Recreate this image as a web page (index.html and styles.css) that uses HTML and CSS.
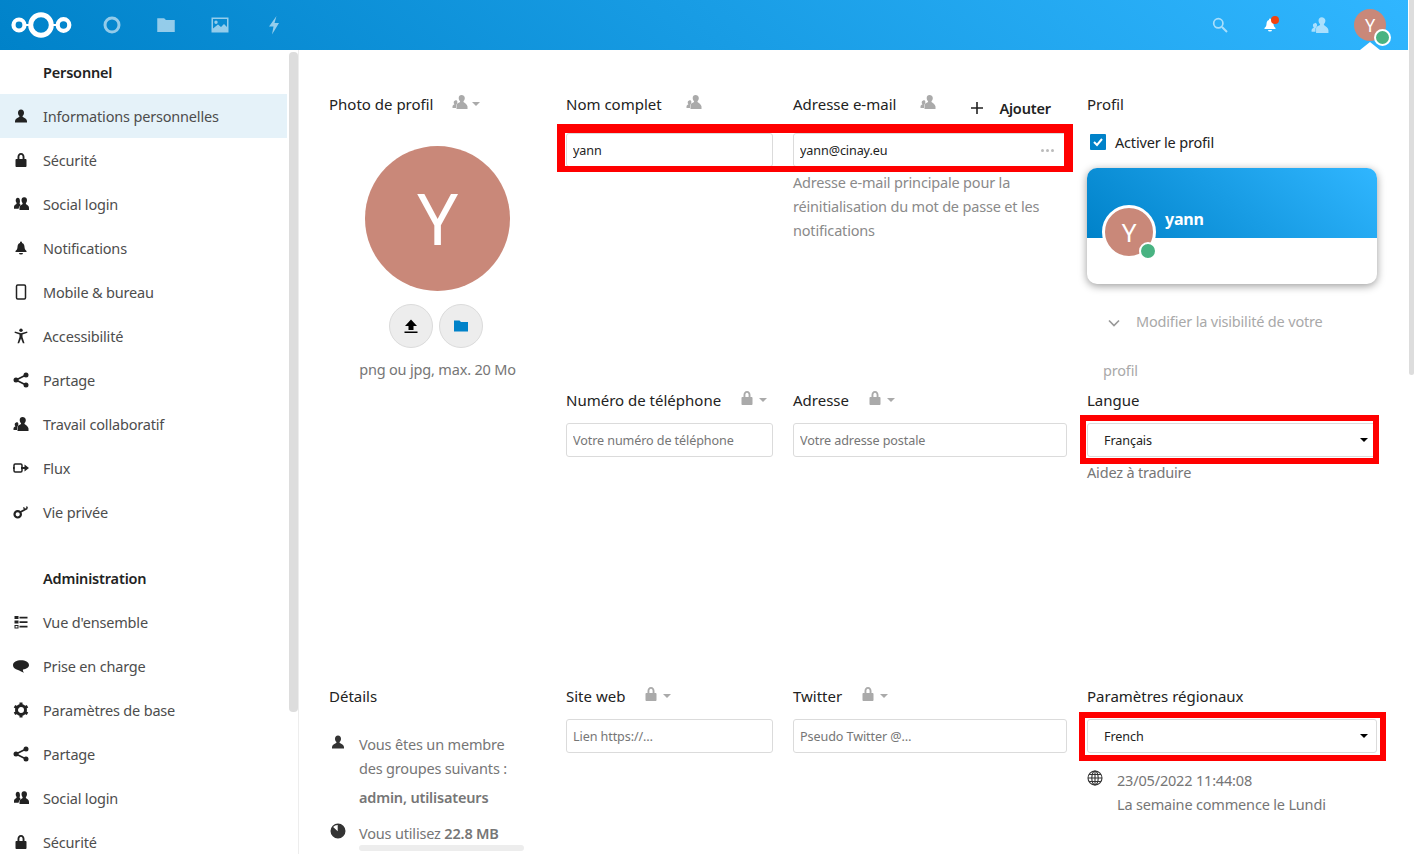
FILE: index.html
```html
<!DOCTYPE html>
<html lang="fr">
<head>
    <meta charset="UTF-8">
    <meta name="viewport" content="width=device-width, initial-scale=1.0">
    <title>Informations personnelles</title>
    <link rel="stylesheet" href="styles.css">
</head>
<body>
    <svg class="sprites" xmlns="http://www.w3.org/2000/svg">
        <symbol id="i-user" viewBox="0 0 16 16"><path d="M8 1.500c-1.900 0-3 1.400-3 3.200 0 1.200.5 2.300 1.200 3 .4.400.3 1.100-.1 1.400C4.500 10 2.300 10.700 2 13v1.500h12V13c-.3-2.300-2.500-3-4.100-3.900-.4-.3-.5-1-.1-1.400.7-.7 1.200-1.800 1.200-3 0-1.800-1.100-3.200-3-3.200z"/></symbol>
        <symbol id="i-lock" viewBox="0 0 16 16"><path fill-rule="evenodd" d="M8 1C5.800 1 4.500 2.800 4.500 5v2h-1c-.5 0-1 .4-1 1v6c0 .6.5 1 1 1h9c.5 0 1-.4 1-1V8c0-.6-.5-1-1-1h-1V5c0-2.200-1.300-4-3.500-4zm0 1.800c1 0 1.600 1 1.600 2.200v2H6.400V5c0-1.200.6-2.200 1.600-2.200z"/></symbol>
        <symbol id="i-group" viewBox="0 1.500 16 13.500" preserveAspectRatio="none"><path d="M11 2.500c-1.500 0-2.500 1.100-2.500 2.600 0 1 .4 1.800 1 2.400.3.300.2.800-.1 1-1.100.7-2.700 1.100-2.900 2.900v2h9.500v-2c-.2-1.800-1.800-2.200-2.900-2.900-.3-.2-.4-.7-.1-1 .6-.6 1-1.400 1-2.400 0-1.500-1-2.600-2.500-2.600z"/><path d="M4.800 3C3.500 3 2.700 4 2.700 5.300c0 .8.3 1.500.8 2 .2.300.2.700-.1.900-.9.600-2.300.9-2.400 2.400v1.700h4.600c.1-1.400 1-2.300 2.100-3 0-.4-.5-.9-.9-1.100-.2-.2-.3-.6-.1-.9.5-.5.2-1.300.2-2C6.900 4 6.100 3 4.800 3z"/></symbol>
        <symbol id="i-contacts" viewBox="0 0 16 16"><path d="M9.500 1C7.800 1 6.700 2.300 6.700 4c0 1.300.5 2.300 1.200 3 .3.400.2 1-.2 1.200-1.300.7-2.700 1.100-3.200 2.300V15h11v-2.500c-.3-2-2.300-3.200-3.700-4.300-.4-.2-.5-.8-.2-1.200.7-.7 1.200-1.700 1.200-3C12.800 2.300 11.200 1 9.500 1z"/><path d="M3.500 6.500c-1 0-1.800.8-1.800 1.900 0 .6.3 1.200.6 1.600.2.200.2.500-.1.600-.7.400-1.700.9-1.700 1.900V14H4v-3c.3-.6.7-1 1.100-1.400-.1-.2-.1-.3 0-.5.2-.3.3-.7.3-1.100 0-1.100-.8-2-1.900-2z"/></symbol>
        <symbol id="i-bell" viewBox="0 0 16 16"><path d="M8 1.500a1 1 0 0 0-1 1v.4C5.200 3.400 4.500 5 4.500 7c0 2-1 3-2 4v1h11v-1c-1-1-2-2-2-4 0-2-.7-3.600-2.500-4.100v-.4a1 1 0 0 0-1-1zM6 13a2 1.600 0 0 0 4 0z"/></symbol>
        <symbol id="i-phone" viewBox="0 0 16 16"><rect x="3.500" y="1" width="9" height="14" rx="1.200" fill="none" stroke="currentColor" stroke-width="1.500"/></symbol>
        <symbol id="i-access" viewBox="0 0 16 16"><circle cx="8" cy="2.300" r="1.700"/><path d="M1.500 4.800 6.500 6.500V9l-2 6.200h1.600L8 10.500l1.900 4.700h1.600L9.500 9V6.500l5-1.700-.4-1.200L8 5.300 1.900 3.600z"/></symbol>
        <symbol id="i-share" viewBox="0 0 16 16"><path d="M13 3 3 8l10 5" fill="none" stroke="currentColor" stroke-width="1.700"/><circle cx="3" cy="8" r="2.500"/><circle cx="13" cy="3" r="2.500"/><circle cx="13" cy="13" r="2.500"/></symbol>
        <symbol id="i-flow" viewBox="0 0 16 16"><rect x="1" y="4" width="8" height="8" rx="1.200" fill="none" stroke="currentColor" stroke-width="1.500"/><path d="M0 7h1.500v2H0zM8 7h3.500V4.500L16 8l-4.500 3.500V9H8z"/></symbol>
        <symbol id="i-key" viewBox="0 0 16 16"><circle cx="4.700" cy="10.300" r="3.200" fill="none" stroke="currentColor" stroke-width="2.200"/><path d="M7 8.300 14 4.500" fill="none" stroke="currentColor" stroke-width="1.800"/><path d="M11.500 5 10.500 3.300M14.500 4.500 13.500 2.500" fill="none" stroke="currentColor" stroke-width="1.400"/></symbol>
        <symbol id="i-list" viewBox="0 0 16 16"><path d="M1.500 2h4v3h-4zM1.500 6.500h4v3h-4zM6.500 2.800h8v1.600h-8zM6.500 7.300h8v1.600h-8zM6.500 11.800h8v1.600h-8z"/><rect x="2" y="11.500" width="3" height="2.500" fill="none" stroke="currentColor"/></symbol>
        <symbol id="i-chat" viewBox="0 0 16 16"><path d="M8 2.300c-4.200 0-8 1.800-8 5 0 2.400 2.200 4 5 4.600 1.500.2 3.500 2 6 2.800-1-1-1.300-2.200-1-3.100 3.200-.5 6-2 6-4.300 0-3.200-3.800-5-8-5z"/></symbol>
        <symbol id="i-gear" viewBox="0 0 16 16"><circle cx="8" cy="8" r="4.500" fill="none" stroke="currentColor" stroke-width="3"/><path d="M8 .5v15M1.500 4.250l13 7.500M1.500 11.750l13-7.500" stroke="currentColor" stroke-width="3" stroke-dasharray="3 9"/></symbol>
        <symbol id="i-folder" viewBox="0 0 16 16"><path d="M1 2.500h5.500L8 4h7v9.500H1z"/></symbol>
        <symbol id="i-upload" viewBox="0 0 16 16"><path d="M8 1.500 14 8h-3.500v4h-5V8H2zM1.500 13.500h13V15h-13z"/></symbol>
        <symbol id="i-globe" viewBox="0 0 16 16"><g fill="none" stroke="currentColor" stroke-width="1.100"><circle cx="8" cy="8" r="7"/><ellipse cx="8" cy="8" rx="3.200" ry="7"/><path d="M8 1v14M1 8h14M2 4.500h12M2 11.500h12"/></g></symbol>
        <symbol id="i-quota" viewBox="0 0 16 16"><path fill-rule="evenodd" d="M8 .5a7.500 7.500 0 1 0 0 15 7.500 7.500 0 0 0 0-15zM7.700 1.900v6.300L3.100 4a6 6 0 0 1 4.600-2.100z"/></symbol>
    </svg>

    <div class="page">
        <div class="page-main">
            <header class="topbar">
                <a class="logo" href="#">
                    <svg width="62" height="28" viewBox="0 0 62 28"><g fill="none" stroke="#fff"><path d="M14 14h4M41 14h5" stroke-width="2"/><circle cx="8" cy="14" r="5.500" stroke-width="4.200"/><circle cx="30" cy="14" r="10.300" stroke-width="5"/><circle cx="52.500" cy="14" r="5.800" stroke-width="4.200"/></g></svg>
                </a>
                <nav class="app-menu">
                    <a href="#"><svg width="20" height="20" viewBox="0 0 20 20"><circle cx="10" cy="10" r="7" fill="none" stroke="currentColor" stroke-width="3"/></svg></a>
                    <a href="#"><svg width="20" height="20"><use href="#i-folder"/></svg></a>
                    <a href="#"><svg width="20" height="20" viewBox="0 0 20 20"><path fill-rule="evenodd" d="M1.500 2.500h17v15h-17zM3 4v9.500l5-4 3 2.500 3-3 3 3V4zM6 5.500a1.700 1.700 0 1 1 0 3.400 1.700 1.700 0 0 1 0-3.400z"/></svg></a>
                    <a href="#"><svg width="20" height="20" viewBox="0 0 20 20"><path d="M12.500 1 5 11.500h4.500L8 19.500 15 8h-4.500z"/></svg></a>
                </nav>
                <div class="top-right">
                    <a class="top-icon dim" href="#"><svg width="16" height="16" viewBox="0 0 16 16"><circle cx="6.300" cy="6.300" r="4.600" fill="none" stroke="currentColor" stroke-width="1.700"/><path d="m10 10 5 5" stroke="currentColor" stroke-width="2"/></svg></a>
                    <a class="top-icon notif" href="#"><svg width="16" height="16"><use href="#i-bell"/></svg><span class="notif-dot"></span></a>
                    <a class="top-icon dim" href="#"><svg width="18" height="18"><use href="#i-contacts"/></svg></a>
                    <a class="top-avatar" href="#">Y<span class="status-dot"></span></a>
                </div>
            </header>

            <div class="layout">
                <aside class="sidebar">
                    <nav class="side-nav">
                        <h3>Personnel</h3>
                        <a class="active" href="#"><svg><use href="#i-user"/></svg>Informations personnelles</a>
                        <a href="#"><svg><use href="#i-lock"/></svg>Sécurité</a>
                        <a href="#"><svg><use href="#i-group"/></svg>Social login</a>
                        <a href="#"><svg><use href="#i-bell"/></svg>Notifications</a>
                        <a href="#"><svg><use href="#i-phone"/></svg>Mobile &amp; bureau</a>
                        <a href="#"><svg><use href="#i-access"/></svg>Accessibilité</a>
                        <a href="#"><svg><use href="#i-share"/></svg>Partage</a>
                        <a href="#"><svg><use href="#i-contacts"/></svg>Travail collaboratif</a>
                        <a href="#"><svg><use href="#i-flow"/></svg>Flux</a>
                        <a href="#"><svg><use href="#i-key"/></svg>Vie privée</a>
                        <h3 class="second">Administration</h3>
                        <a href="#"><svg><use href="#i-list"/></svg>Vue d'ensemble</a>
                        <a href="#"><svg><use href="#i-chat"/></svg>Prise en charge</a>
                        <a href="#"><svg><use href="#i-gear"/></svg>Paramètres de base</a>
                        <a href="#"><svg><use href="#i-share"/></svg>Partage</a>
                        <a href="#"><svg><use href="#i-group"/></svg>Social login</a>
                        <a href="#"><svg><use href="#i-lock"/></svg>Sécurité</a>
                    </nav>
                    <div class="side-scroll"><div class="side-thumb"></div></div>
                </aside>

                <main class="content">
                    <!-- row 1 -->
                    <section class="photo">
                        <h4 class="tall">Photo de profil <svg class="vis"><use href="#i-contacts"/></svg><span class="caret"></span></h4>
                        <div class="big-avatar">Y</div>
                        <div class="photo-btns">
                            <button class="round-btn"><svg width="16" height="16"><use href="#i-upload"/></svg></button>
                            <button class="round-btn blue"><svg width="16" height="16"><use href="#i-folder"/></svg></button>
                        </div>
                        <p class="hint">png ou jpg, max. 20 Mo</p>
                    </section>
                    <section>
                        <h4 class="tall">Nom complet <svg class="vis wide"><use href="#i-contacts"/></svg></h4>
                        <input class="field short" type="text" value="yann">
                    </section>
                    <section>
                        <h4 class="tall">Adresse e-mail <svg class="vis wide"><use href="#i-contacts"/></svg>
                            <span class="add-mail"><svg width="12" height="12" viewBox="0 0 12 12"><path d="M5.200 0h1.600v5.200H12v1.600H6.800V12H5.200V6.800H0V5.200h5.200z"/></svg><b>Ajouter</b></span>
                        </h4>
                        <div class="mail-field">
                            <input class="field long" type="text" value="yann@cinay.eu">
                            <span class="dots"><i></i><i></i><i></i></span>
                        </div>
                        <p class="help">Adresse e-mail principale pour la<br>réinitialisation du mot de passe et les<br>notifications</p>
                    </section>
                    <section>
                        <h4 class="profile-title">Profil</h4>
                        <label class="enable">
                            <span class="check"><svg width="14" height="14" viewBox="0 0 14 14"><path d="m3 7 3 3 5-6" fill="none" stroke="#fff" stroke-width="2"/></svg></span>
                            Activer le profil
                        </label>
                        <div class="card">
                            <div class="card-top">
                                <div class="card-avatar">Y<span class="card-dot"></span></div>
                                <span class="card-name">yann</span>
                            </div>
                        </div>
                        <div class="visibility"><span class="chev"><svg width="12" height="8" viewBox="0 0 12 8"><path d="m1 1.500 5 5 5-5" fill="none" stroke="currentColor" stroke-width="1.700"/></svg></span>Modifier la visibilité de votre<br>profil</div>
                    </section>

                    <!-- row 2 -->
                    <section></section>
                    <section>
                        <h4>Numéro de téléphone <svg class="vis"><use href="#i-lock"/></svg><span class="caret"></span></h4>
                        <input class="field short" type="text" placeholder="Votre numéro de téléphone">
                    </section>
                    <section>
                        <h4>Adresse <svg class="vis"><use href="#i-lock"/></svg><span class="caret"></span></h4>
                        <input class="field long" type="text" placeholder="Votre adresse postale">
                    </section>
                    <section>
                        <h4>Langue</h4>
                        <div class="select">Français</div>
                        <p class="translate">Aidez à traduire</p>
                    </section>

                    <!-- row 3 -->
                    <section>
                        <h4>Détails</h4>
                        <div class="detail groups">
                            <svg><use href="#i-user"/></svg>
                            <div>
                                <p>Vous êtes un membre<br>des groupes suivants :</p>
                                <p class="strong">admin, utilisateurs</p>
                            </div>
                        </div>
                        <div class="detail quota">
                            <svg><use href="#i-quota"/></svg>
                            <div>
                                <p>Vous utilisez <b>22.8 MB</b></p>
                                <div class="quota-bar"></div>
                            </div>
                        </div>
                    </section>
                    <section>
                        <h4>Site web <svg class="vis"><use href="#i-lock"/></svg><span class="caret"></span></h4>
                        <input class="field short" type="text" placeholder="Lien https://…">
                    </section>
                    <section>
                        <h4>Twitter <svg class="vis"><use href="#i-lock"/></svg><span class="caret"></span></h4>
                        <input class="field long" type="text" placeholder="Pseudo Twitter @…">
                    </section>
                    <section>
                        <h4>Paramètres régionaux</h4>
                        <div class="select">French</div>
                        <div class="detail locale">
                            <svg><use href="#i-globe"/></svg>
                            <p>23/05/2022 11:44:08<br>La semaine commence le Lundi</p>
                        </div>
                    </section>
                </main>
            </div>
        </div>
        <div class="page-scroll"><div class="page-thumb"></div></div>
    </div>

    <!-- red annotation frames from the screenshot -->
    <div class="mark mark-names"></div>
    <div class="mark mark-lang"></div>
    <div class="mark mark-locale"></div>
</body>
</html>
```

FILE: styles.css
```css
* {
    box-sizing: border-box;
}

body {
    margin: 0;
    padding: 0;
    height: 854px;
    overflow: hidden;
    position: relative;
    background-color: #fff;
    color: #222;
    font-family: "Noto Sans", sans-serif;
    font-size: 14.5px;
    letter-spacing: -0.18px;
}

a {
    color: inherit;
    text-decoration: none;
}

p {
    margin: 0;
}

.sprites {
    display: none;
}

svg {
    fill: currentColor;
    flex: none;
}

.page {
    display: flex;
    height: 854px;
}

.page-main {
    width: 1408px;
    display: flex;
    flex-direction: column;
}

.page-scroll {
    width: 6px;
    padding-left: 1px;
}

.page-thumb {
    height: 375px;
    background-color: #ddd;
    border-radius: 0 0 3px 3px;
}

/* top bar */
.topbar {
    height: 50px;
    flex: none;
    display: flex;
    align-items: center;
    position: relative;
    color: #fff;
    background: linear-gradient(40deg, #0082c9 0%, #30b6ff 100%);
}

.logo {
    width: 85px;
    padding-left: 11px;
    display: flex;
}

.app-menu {
    display: flex;
}

.app-menu a {
    width: 54px;
    height: 50px;
    display: flex;
    align-items: center;
    justify-content: center;
    opacity: 0.57;
}

.top-right {
    margin-left: auto;
    padding-right: 13px;
    display: flex;
    align-items: center;
}

.top-icon {
    width: 50px;
    height: 50px;
    display: flex;
    align-items: center;
    justify-content: center;
    position: relative;
}

.top-icon.dim {
    opacity: 0.6;
}

.notif-dot {
    position: absolute;
    top: 16px;
    left: 26px;
    width: 8px;
    height: 8px;
    border-radius: 50%;
    background-color: #f4420d;
}

.top-avatar {
    width: 32px;
    height: 32px;
    margin: 0 9px;
    border-radius: 50%;
    background-color: #c98879;
    color: #fff;
    font-size: 18px;
    line-height: 32px;
    text-align: center;
    position: relative;
}

/* little tab pointing at the open page */
.top-avatar::after {
    content: "";
    position: absolute;
    top: 33px;
    left: 6px;
    border: 10px solid transparent;
    border-top: 0;
    border-bottom: 8px solid #fff;
}

.status-dot {
    position: absolute;
    left: 20px;
    top: 20px;
    width: 17px;
    height: 17px;
    border-radius: 50%;
    background-color: #49b382;
    border: 2px solid #fff;
    z-index: 1;
}

.layout {
    flex: 1;
    display: flex;
    min-height: 0;
}

/* sidebar */
.sidebar {
    width: 299px;
    flex: none;
    display: flex;
    border-right: 1px solid #ededed;
    overflow: hidden;
}

.side-nav {
    width: 287px;
    flex: none;
}

.side-nav h3 {
    margin: 0;
    height: 44px;
    padding-left: 43px;
    font-size: 14.5px;
    font-weight: 600;
    line-height: 44px;
}

.side-nav h3.second {
    margin-top: 22px;
}

.side-nav a {
    height: 44px;
    padding-left: 13px;
    display: flex;
    align-items: center;
    gap: 14px;
    color: #4d4d4d;
}

.side-nav a svg {
    width: 16px;
    height: 16px;
    color: #222;
}

.side-nav a.active {
    background-color: #e5f2f9;
}

.side-scroll {
    flex: 1;
    padding: 2px 0 0 2px;
}

.side-thumb {
    height: 660px;
    background-color: #ddd;
    border-radius: 4px;
}

/* main grid */
.content {
    flex: 1;
    padding: 43px 0 0 30px;
    display: grid;
    grid-template-columns: 237px 227px 294px 290px;
    grid-template-rows: 296px 296px auto;
    overflow: hidden;
}

h4 {
    margin: 0 0 14px;
    height: 20px;
    padding-top: 2px;
    display: flex;
    align-items: center;
    font-size: 15px;
    font-weight: 400;
    letter-spacing: 0;
    line-height: 20px;
    white-space: nowrap;
}

h4.tall {
    height: 26px;
    padding-top: 1px;
    align-items: flex-start;
}

.vis {
    width: 16px;
    height: 16px;
    margin-left: 18px;
    margin-top: -4px;
    color: #aaa;
}

h4.tall .vis {
    margin-top: 0;
}

.vis.wide {
    margin-left: 24px;
}

.caret {
    margin-left: 4px;
    border: 4px solid transparent;
    border-top: 4px solid #aaa;
    border-bottom: 0;
}

h4.tall .caret {
    margin-top: 8px;
}

.field {
    height: 34px;
    padding: 0 6px;
    display: block;
    border: 1px solid #dbdbdb;
    border-radius: 3px;
    background-color: #fff;
    color: #222;
    font-family: inherit;
    font-size: 12.6px;
    letter-spacing: -0.1px;
}

.field::placeholder {
    color: #767676;
    opacity: 1;
}

.field.short {
    width: 207px;
}

.field.long {
    width: 274px;
}

/* photo column */
.photo {
    width: 217px;
}

.photo h4 {
    margin-bottom: 27px;
}

.big-avatar {
    width: 145px;
    height: 145px;
    margin: 0 auto;
    border-radius: 50%;
    background-color: #c98879;
    color: #fff;
    font-size: 72px;
    line-height: 143px;
    text-align: center;
}

.photo-btns {
    margin-top: 13px;
    padding-right: 3px;
    display: flex;
    justify-content: center;
    gap: 6px;
}

.round-btn {
    width: 44px;
    height: 44px;
    padding: 0;
    display: flex;
    align-items: center;
    justify-content: center;
    border: 1px solid #dbdbdb;
    border-radius: 50%;
    background-color: #ededed;
    color: #000;
}

.round-btn.blue {
    color: #0082c9;
}

.hint {
    margin-top: 10px;
    color: #767676;
    line-height: 22px;
    text-align: center;
}

/* e-mail */
.add-mail {
    margin: 4px 0 0 35px;
    display: flex;
    align-items: center;
    gap: 16px;
    font-size: 14.5px;
    letter-spacing: -0.18px;
}

.add-mail b {
    font-weight: 600;
}

.mail-field {
    position: relative;
    width: 274px;
}

.dots {
    position: absolute;
    right: 13px;
    top: 16px;
    display: flex;
    gap: 2px;
}

.dots i {
    width: 3px;
    height: 3px;
    border-radius: 50%;
    background-color: #bbb;
}

.help {
    margin-top: 3px;
    color: #8a8a8a;
    line-height: 24px;
    white-space: nowrap;
}

/* profile */
.profile-title {
    margin-bottom: 19px;
}

.enable {
    height: 20px;
    padding-left: 3px;
    display: flex;
    align-items: center;
    gap: 9px;
}

.check {
    width: 16px;
    height: 16px;
    display: flex;
    align-items: center;
    justify-content: center;
    border-radius: 1px;
    background-color: #0082c9;
}

.card {
    width: 290px;
    height: 116px;
    margin-top: 16px;
    border-radius: 10px;
    background-color: #fff;
    box-shadow: 0 2px 8px rgba(0, 0, 0, 0.4);
}

.card-top {
    height: 70px;
    position: relative;
    border-radius: 10px 10px 0 0;
    background: linear-gradient(40deg, #0082c9 0%, #30b6ff 100%);
}

.card-name {
    position: absolute;
    left: 78px;
    top: 39px;
    color: #fff;
    font-size: 16px;
    font-weight: 700;
    line-height: 24px;
}

.card-avatar {
    position: absolute;
    left: 15px;
    top: 37px;
    width: 54px;
    height: 54px;
    border: 3px solid #fff;
    border-radius: 50%;
    background-color: #c98879;
    color: #fff;
    font-size: 26px;
    line-height: 48px;
    text-align: center;
}

.card-dot {
    position: absolute;
    left: 34px;
    top: 34px;
    width: 18px;
    height: 18px;
    border: 2px solid #fff;
    border-radius: 50%;
    background-color: #49b382;
}

.visibility {
    margin-top: 13px;
    padding-left: 16px;
    color: #a9a9a9;
    line-height: 49px;
    white-space: nowrap;
}

.chev {
    width: 33px;
    padding-left: 5px;
    display: inline-block;
    color: #999;
}

/* select */
.select {
    width: 290px;
    height: 34px;
    padding-left: 16px;
    position: relative;
    border: 1px solid #dbdbdb;
    border-radius: 3px;
    font-size: 12.6px;
    letter-spacing: -0.1px;
    line-height: 33px;
}

.select::after {
    content: "";
    position: absolute;
    right: 8px;
    top: 14px;
    border: 4px solid transparent;
    border-top: 4px solid #000;
    border-bottom: 0;
}

.translate {
    margin-top: 4px;
    color: #767676;
    line-height: 22px;
}

/* details */
.detail {
    display: flex;
    color: #767676;
}

.detail > svg {
    width: 16px;
    height: 16px;
    color: #333;
}

.detail p {
    line-height: 24px;
}

.groups {
    margin-top: 27px;
    padding-left: 1px;
    gap: 13px;
}

.groups > svg,
.quota > svg {
    margin-top: 2px;
}

.groups .strong {
    margin-top: 5px;
    font-weight: 600;
}

.detail b {
    font-weight: 600;
}

.quota {
    margin-top: 12px;
    padding-left: 1px;
    gap: 13px;
}

.quota-bar {
    width: 165px;
    height: 6px;
    border-radius: 3px;
    background-color: #ededed;
}

.locale {
    margin-top: 15px;
    gap: 14px;
}

.locale > svg {
    margin-top: 2px;
}

/* red annotation frames */
.mark {
    position: absolute;
    border: 6px solid #f00;
}

.mark-names {
    left: 557px;
    top: 124px;
    width: 516px;
    height: 48px;
    border-width: 9px 9px 6px 8px;
}

.mark-lang {
    left: 1080px;
    top: 415px;
    width: 299px;
    height: 49px;
}

.mark-locale {
    left: 1079px;
    top: 712px;
    width: 307px;
    height: 49px;
}
```
